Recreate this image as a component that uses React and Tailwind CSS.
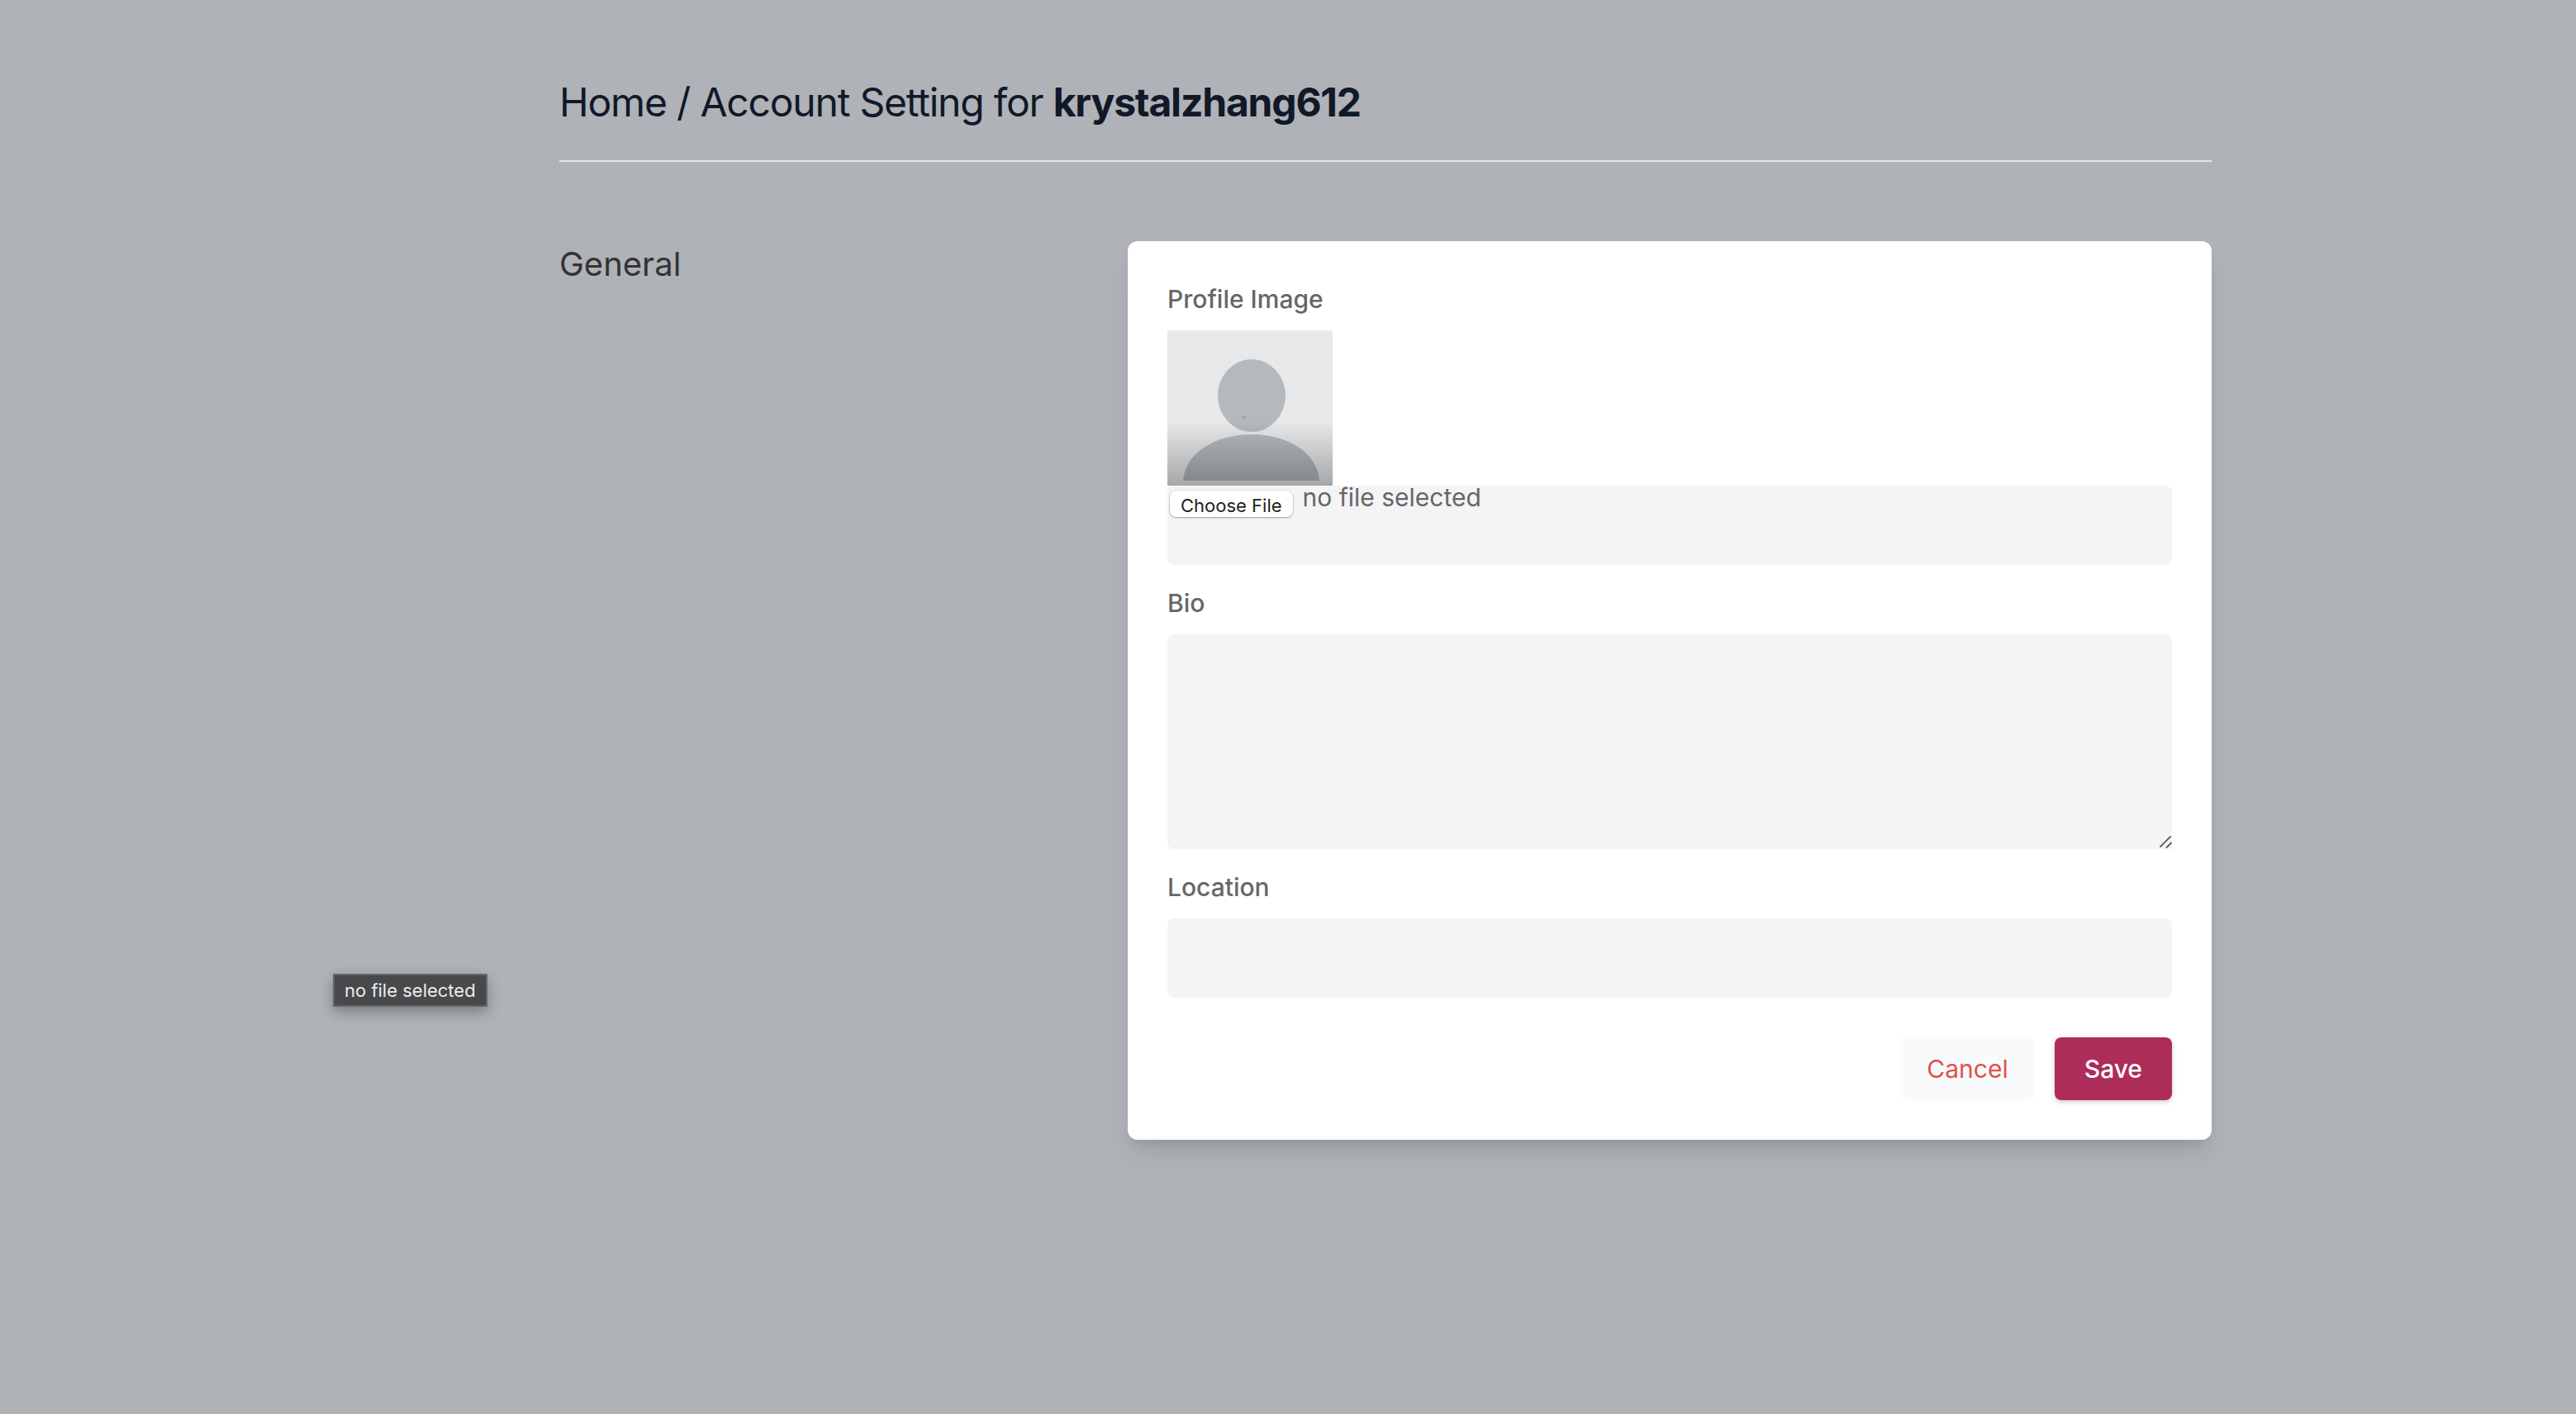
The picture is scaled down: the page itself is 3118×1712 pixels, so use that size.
import { useRef } from "react";

const label = "block text-[30px] font-medium leading-11 text-[#666]";

function Avatar() {
  return (
    <svg viewBox="0 0 200 188" className="mt-4 block h-[188px] w-[200px]" role="img" aria-label="Profile">
      <defs>
        <linearGradient id="shade" x1="0" y1="0" x2="0" y2="1">
          <stop offset="0" stopColor="#000" stopOpacity="0" />
          <stop offset="1" stopColor="#000" stopOpacity="0.28" />
        </linearGradient>
      </defs>
      <rect width="200" height="188" fill="#e6e8ea" />
      <ellipse cx="102" cy="79" rx="41" ry="44" fill="#b5b9bc" />
      <path d="M19 182C21 150 56 126 102 126s80 24 82 56Z" fill="#b5b9bc" />
      <rect y="110" width="200" height="78" fill="url(#shade)" />
      <path d="M91 104l3 3" stroke="#8b8f92" strokeWidth="1.5" />
    </svg>
  );
}

export default function App() {
  const fileRef = useRef(null);
  return (
    <div className="relative min-h-screen bg-[#afb2b7] pl-[236px] font-['Inter',sans-serif]">
      <main className="mx-auto max-w-[2000px] pt-24">
        <h1 className="border-b-2 border-[#e5e7eb] pb-[42px] text-[48px] font-normal leading-14 tracking-tight text-[#111827]">
          Home / Account Setting for <strong className="font-bold">krystalzhang612</strong>
        </h1>
        <div className="mt-24 grid grid-cols-3 gap-16">
          <h2 className="text-[40px] leading-[56px] text-[#333]">General</h2>
          <form
            className="col-span-2 rounded-xl bg-white p-12 shadow-[0_20px_30px_-6px_rgba(0,0,0,0.1),0_8px_12px_-4px_rgba(0,0,0,0.08)]"
            onSubmit={(e) => e.preventDefault()}
          >
            <label htmlFor="image" className={label}>Profile Image</label>
            <Avatar />
            <div className="flex h-24 items-start gap-3 rounded-lg bg-[#f3f4f6] px-[3px]">
              <input ref={fileRef} id="image" type="file" className="sr-only" />
              <button
                type="button"
                onClick={() => fileRef.current.click()}
                className="mt-[6px] h-8 rounded-lg bg-white px-[13px] text-[22px] leading-9 text-[#222] shadow-[0_0_1px_1px_rgba(0,0,0,0.08),0_1px_2px_rgba(0,0,0,0.3)]"
              >
                Choose File
              </button>
              <span className="text-[30px] leading-7 text-[#666]">no file selected</span>
            </div>
            <label htmlFor="bio" className={`mt-6 ${label}`}>Bio</label>
            <div className="relative mt-4">
              <textarea
                id="bio"
                className="block h-[260px] w-full resize-none rounded-lg rounded-br-none bg-[#f3f4f6] px-6 py-4 text-[30px] text-[#666] outline-none"
              />
              <svg viewBox="0 0 16 16" className="pointer-events-none absolute right-0 bottom-0 size-4" fill="none" stroke="#5c5c5c" strokeWidth="1.8" strokeLinecap="round" aria-hidden="true">
                <path d="M2 13L14 1M9.500 14L15 8.500" />
              </svg>
            </div>
            <label htmlFor="location" className={`mt-6 ${label}`}>Location</label>
            <input
              id="location"
              type="text"
              className="mt-4 block h-24 w-full rounded-lg bg-[#f3f4f6] px-6 text-[30px] text-[#666] outline-none"
            />
            <div className="mt-12 flex justify-end gap-6">
              <button type="button" className="h-[76px] rounded-lg bg-[#f9fafc] px-8 text-[30px] leading-10 text-[#e0524a]">
                Cancel
              </button>
              <button
                type="submit"
                className="h-[76px] rounded-lg bg-[#ad2c5a] px-9 text-[30px] font-medium leading-10 text-white shadow-[0_2px_6px_rgba(0,0,0,0.2)]"
              >
                Save
              </button>
            </div>
          </form>
        </div>
      </main>
      <div
        role="tooltip"
        className="absolute top-[1179px] left-[403px] border-2 border-[#636467] bg-[#48494b] px-3 text-[22px] leading-9 text-[#ececec] shadow-[0_6px_16px_rgba(0,0,0,0.3)]"
      >
        no file selected
      </div>
    </div>
  );
}
